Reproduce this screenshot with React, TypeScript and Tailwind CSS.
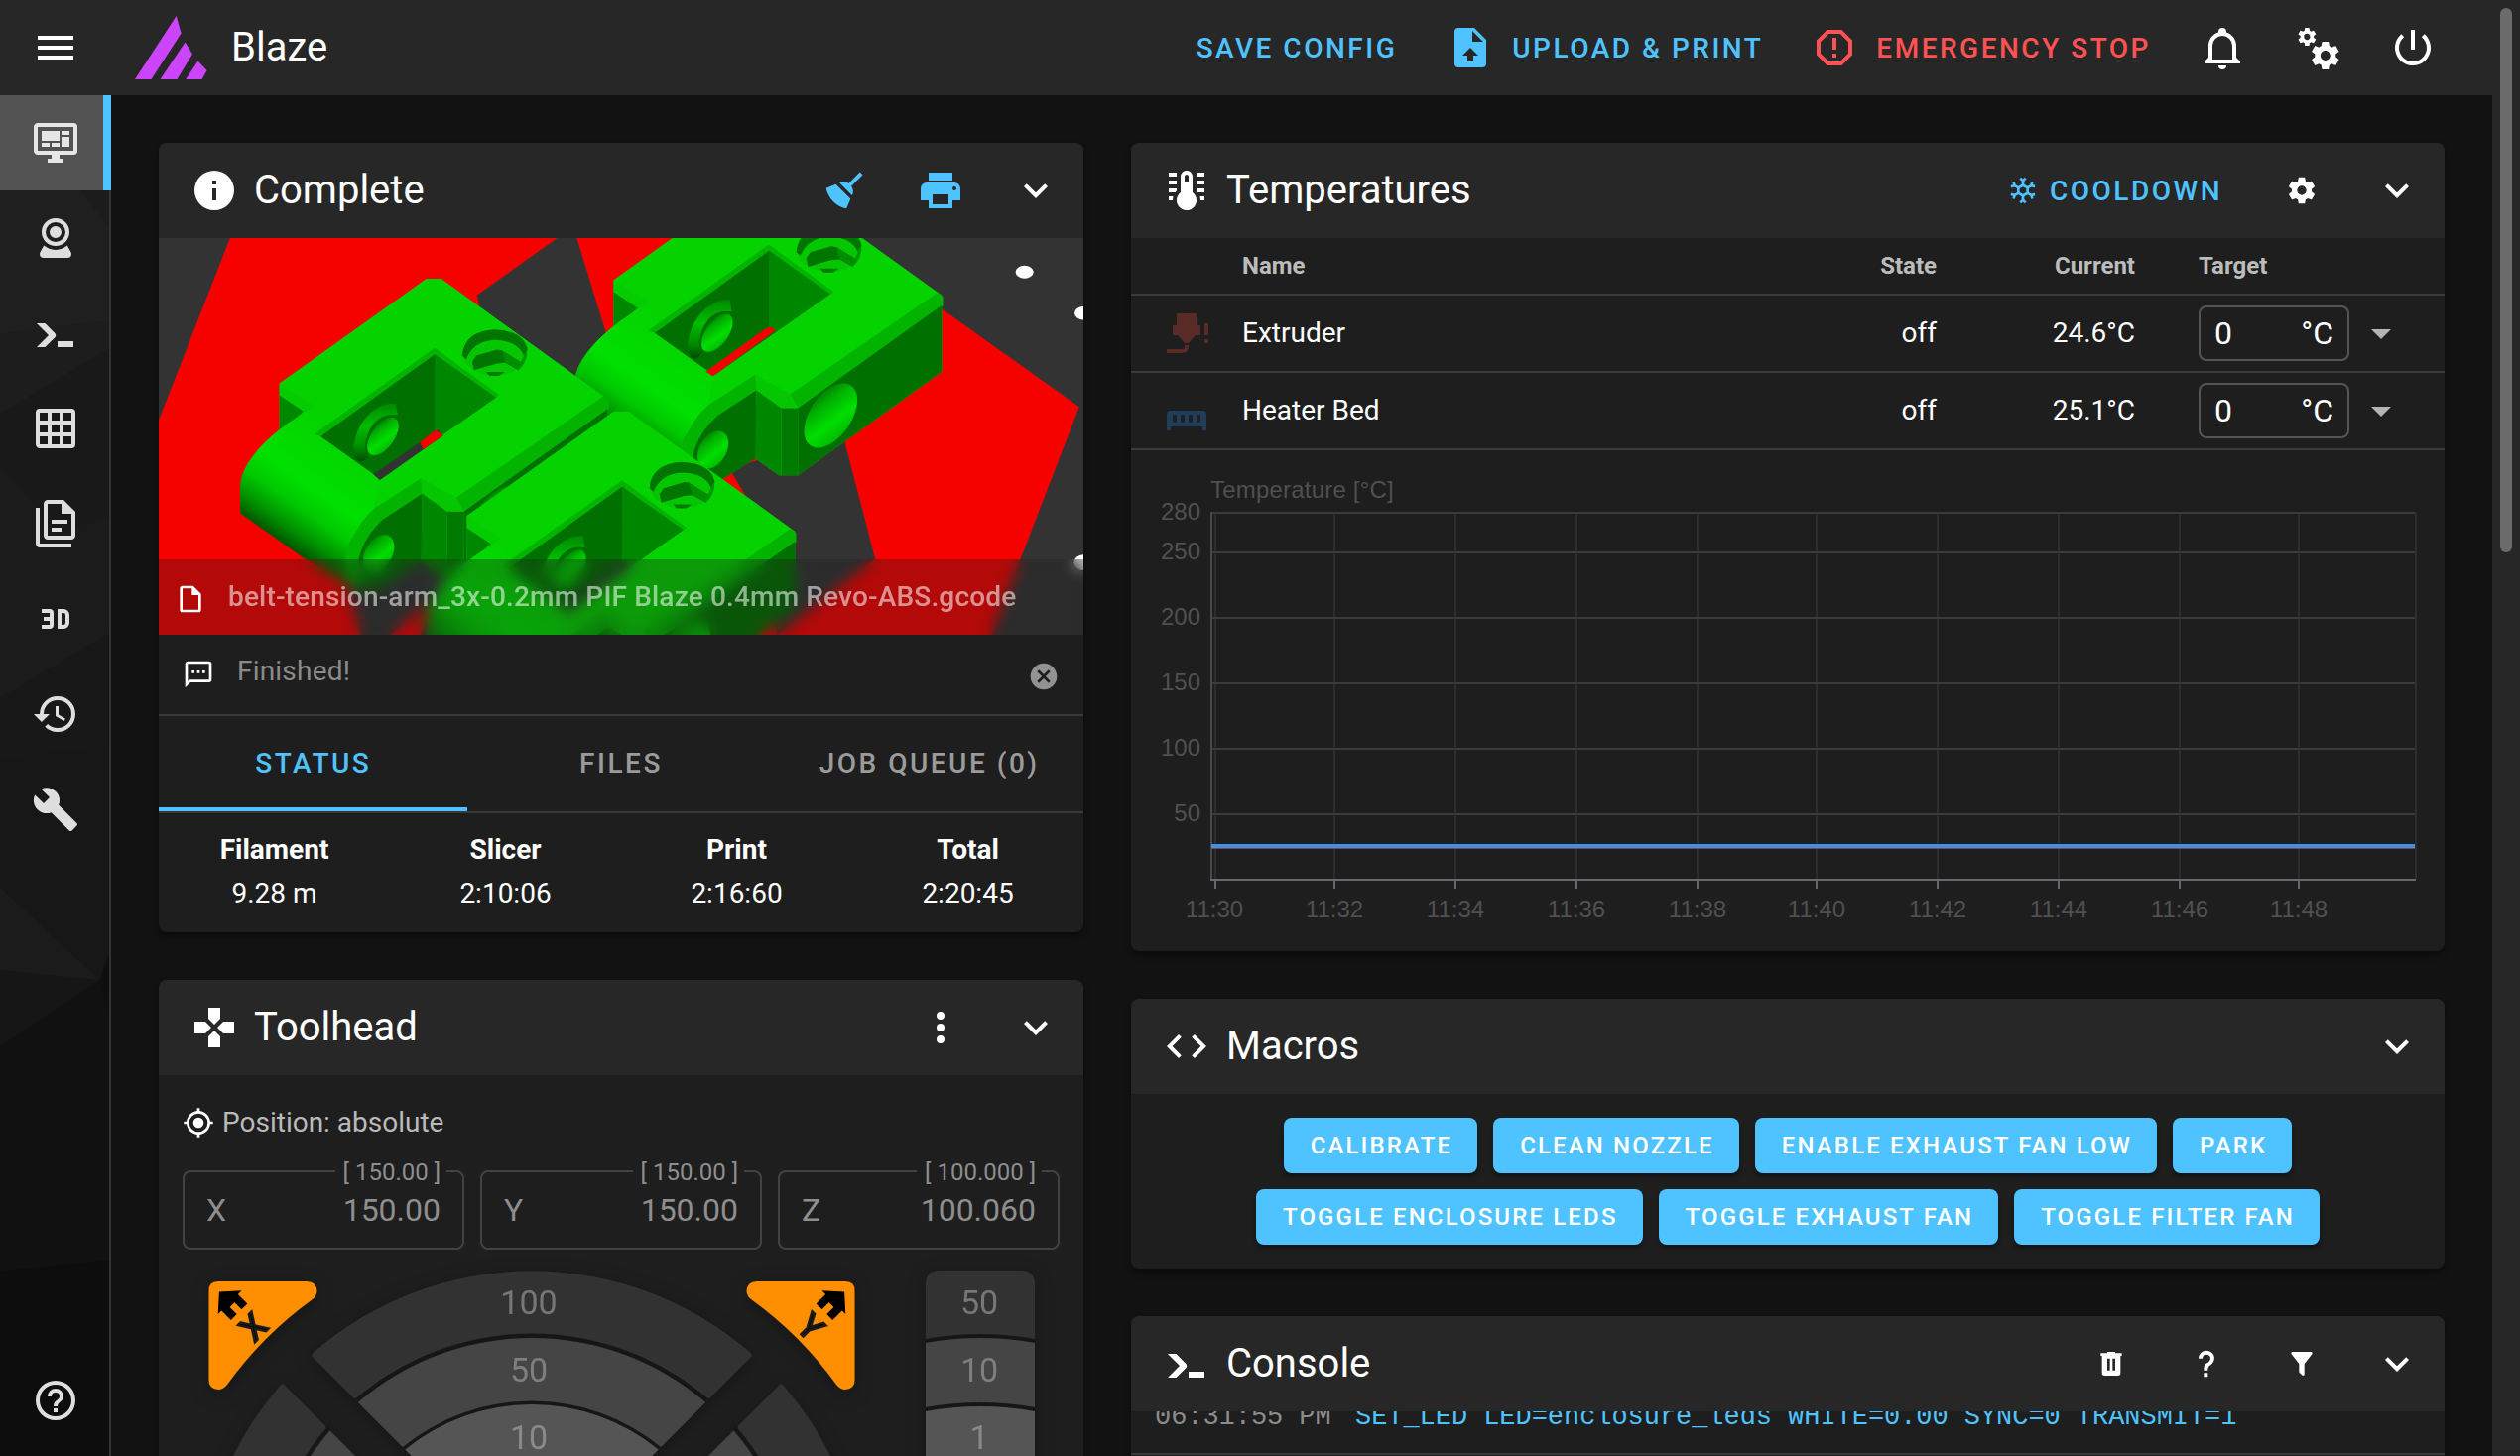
import React from "react";

const I = {
  menu: "M3,6H21V8H3V6M3,11H21V13H3V11M3,16H21V18H3V16Z",
  dashboard:
    "M21,16V4H3V16H21M21,2A2,2 0 0,1 23,4V16A2,2 0 0,1 21,18H14V20H16V22H8V20H10V18H3C1.89,18 1,17.1 1,16V4C1,2.89 1.89,2 3,2H21M5,6H14V11H5V6M15,6H19V8H15V6M19,9V14H15V9H19M5,12H9V14H5V12M10,12H14V14H10V12Z",
  webcam:
    "M12,2A7,7 0 0,1 19,9A7,7 0 0,1 12,16A7,7 0 0,1 5,9A7,7 0 0,1 12,2M12,4A5,5 0 0,0 7,9A5,5 0 0,0 12,14A5,5 0 0,0 17,9A5,5 0 0,0 12,4M12,6A3,3 0 0,1 15,9A3,3 0 0,1 12,12A3,3 0 0,1 9,9A3,3 0 0,1 12,6M6,22A2,2 0 0,1 4,20C4,19.62 4.1,19.27 4.29,18.97L6.11,15.81C7.69,17.17 9.75,18 12,18C14.25,18 16.31,17.17 17.89,15.81L19.71,18.97C19.9,19.27 20,19.62 20,20A2,2 0 0,1 18,22H6Z",
  console:
    "M13,19V16H21V19H13M8.5,13L2.47,7H6.71L11.67,11.95C12.25,12.54 12.25,13.5 11.67,14.07L6.74,19H2.5L8.5,13Z",
  grid: "M10,4V8H14V4H10M16,4V8H20V4H16M16,10V14H20V10H16M16,16V20H20V16H16M14,20V16H10V20H14M8,20V16H4V20H8M8,14V10H4V14H8M8,8V4H4V8H8M10,14H14V10H10V14M4,2H20A2,2 0 0,1 22,4V20A2,2 0 0,1 20,22H4C2.92,22 2,21.1 2,20V4A2,2 0 0,1 4,2Z",
  files:
    "M16 0H8C6.9 0 6 .9 6 2V18C6 19.1 6.9 20 8 20H20C21.1 20 22 19.1 22 18V6L16 0M20 18H8V2H15V7H20V18M4 4V22H20V24H4C2.9 24 2 23.1 2 22V4H4M10 10V12H18V10H10M10 14V16H15V14H10Z",
  viewer3d:
    "M5,7H9A2,2 0 0,1 11,9V15A2,2 0 0,1 9,17H5V15H9V13H6V11H9V9H5V7M13,7H16A3,3 0 0,1 19,10V14A3,3 0 0,1 16,17H13V7M16,15A1,1 0 0,0 17,14V10A1,1 0 0,0 16,9H15V15H16Z",
  history:
    "M13.5,8H12V13L16.28,15.54L17,14.33L13.5,12.25V8M13,3A9,9 0 0,0 4,12H1L4.96,16.03L9,12H6A7,7 0 0,1 13,5A7,7 0 0,1 20,12A7,7 0 0,1 13,19C11.07,19 9.32,18.21 8.06,16.94L6.64,18.36C8.27,20 10.5,21 13,21A9,9 0 0,0 22,12A9,9 0 0,0 13,3",
  wrench:
    "M22.7,19L13.6,9.9C14.5,7.6 14,4.9 12.1,3C10.1,1 7.1,0.6 4.7,1.7L9,6L6,9L1.6,4.7C0.4,7.1 0.9,10.1 2.9,12.1C4.8,14 7.5,14.5 9.8,13.6L18.9,22.7C19.3,23.1 19.9,23.1 20.3,22.7L22.6,20.4C23.1,20 23.1,19.3 22.7,19Z",
  helpCircle:
    "M11,18H13V16H11V18M12,2A10,10 0 0,0 2,12A10,10 0 0,0 12,22A10,10 0 0,0 22,12A10,10 0 0,0 12,2M12,20C7.59,20 4,16.41 4,12C4,7.59 7.59,4 12,4C16.41,4 20,7.59 20,12C20,16.41 16.41,20 12,20M12,6A4,4 0 0,0 8,10H10A2,2 0 0,1 12,8A2,2 0 0,1 14,10C14,12 11,11.75 11,15H13C13,12.75 16,12.5 16,10A4,4 0 0,0 12,6Z",
  fileUpload:
    "M14,2H6A2,2 0 0,0 4,4V20A2,2 0 0,0 6,22H18A2,2 0 0,0 20,20V8L14,2M13.5,16V19H10.5V16H8L12,12L16,16H13.5M13,9V3.5L18.5,9H13Z",
  octagon:
    "M15.73,3H8.27L3,8.27V15.73L8.27,21H15.73L21,15.73V8.27L15.73,3M19,14.9L14.9,19H9.1L5,14.9V9.1L9.1,5H14.9L19,9.1V14.9M11,15H13V17H11V15M11,7H13V13H11V7Z",
  bell: "M10,21H14A2,2 0 0,1 12,23A2,2 0 0,1 10,21M21,19V20H3V19L5,17V11C5,7.9 7.03,5.17 10,4.29C10,4.19 10,4.1 10,4A2,2 0 0,1 12,2A2,2 0 0,1 14,4C14,4.1 14,4.19 14,4.29C16.97,5.17 19,7.9 19,11V17L21,19M17,11A5,5 0 0,0 12,6A5,5 0 0,0 7,11V18H17V11Z",
  cogs: "M15.9,18.45C17.25,18.45 18.35,17.35 18.35,16C18.35,14.65 17.25,13.55 15.9,13.55C14.54,13.55 13.45,14.65 13.45,16C13.45,17.35 14.54,18.45 15.9,18.45M21.1,16.68L22.58,17.84C22.71,17.95 22.75,18.13 22.66,18.29L21.26,20.71C21.17,20.86 21,20.92 20.83,20.86L19.09,20.16C18.73,20.44 18.33,20.67 17.91,20.85L17.64,22.7C17.62,22.87 17.47,23 17.3,23H14.5C14.32,23 14.18,22.87 14.15,22.7L13.89,20.85C13.46,20.67 13.07,20.44 12.71,20.16L10.96,20.86C10.81,20.92 10.62,20.86 10.54,20.71L9.14,18.29C9.05,18.13 9.09,17.95 9.22,17.84L10.7,16.68L10.65,16L10.7,15.31L9.22,14.16C9.09,14.05 9.05,13.86 9.14,13.71L10.54,11.29C10.62,11.13 10.81,11.07 10.96,11.13L12.71,11.84C13.07,11.56 13.46,11.32 13.89,11.15L14.15,9.29C14.18,9.13 14.32,9 14.5,9H17.3C17.47,9 17.62,9.13 17.64,9.29L17.91,11.15C18.33,11.32 18.73,11.56 19.09,11.84L20.83,11.13C21,11.07 21.17,11.13 21.26,11.29L22.66,13.71C22.75,13.86 22.71,14.05 22.58,14.16L21.1,15.31L21.15,16L21.1,16.68M6.69,8.07C7.56,8.07 8.26,7.37 8.26,6.5C8.26,5.63 7.56,4.92 6.69,4.92A1.58,1.58 0 0,0 5.11,6.5C5.11,7.37 5.82,8.07 6.69,8.07M10.03,6.94L11,7.68C11.07,7.75 11.09,7.87 11.03,7.97L10.13,9.53C10.08,9.63 9.96,9.67 9.86,9.63L8.74,9.18L8,9.62L7.81,10.81C7.79,10.92 7.7,11 7.59,11H5.79C5.67,11 5.58,10.92 5.56,10.81L5.4,9.62L4.64,9.18L3.52,9.63C3.41,9.67 3.3,9.63 3.24,9.53L2.34,7.97C2.28,7.87 2.31,7.75 2.39,7.68L3.34,6.94L3.31,6.5L3.34,6.06L2.39,5.32C2.31,5.25 2.28,5.13 2.34,5.03L3.24,3.47C3.3,3.37 3.41,3.33 3.52,3.37L4.63,3.82L5.4,3.38L5.56,2.19C5.58,2.08 5.67,2 5.79,2H7.59C7.7,2 7.79,2.08 7.81,2.19L8,3.38L8.74,3.82L9.86,3.37C9.96,3.33 10.08,3.37 10.13,3.47L11.03,5.03C11.09,5.13 11.07,5.25 11,5.32L10.03,6.06L10.06,6.5L10.03,6.94Z",
  power:
    "M13,3H11V13H13V3M17.83,5.17L16.41,6.59C18.05,7.91 19,9.9 19,12A7,7 0 0,1 12,19C8.14,19 5,15.88 5,12C5,9.91 5.95,7.91 7.58,6.58L6.17,5.17C2.38,8.39 1.92,14.07 5.14,17.86C8.36,21.64 14.04,22.1 17.83,18.88C19.85,17.17 21,14.65 21,12C21,9.37 19.84,6.87 17.83,5.17Z",
  info: "M13,9H11V7H13M13,17H11V11H13M12,2A10,10 0 0,0 2,12A10,10 0 0,0 12,22A10,10 0 0,0 22,12A10,10 0 0,0 12,2Z",
  broom:
    "M19.36,2.72L20.78,4.14L15.06,9.85C16.13,11.39 16.28,13.24 15.38,14.44L9.06,8.12C10.26,7.22 12.11,7.37 13.65,8.44L19.36,2.72M5.93,17.57C3.92,15.56 2.69,13.16 2.35,10.92L7.23,8.83L14.67,16.27L12.58,21.15C10.34,20.81 7.94,19.58 5.93,17.57Z",
  printer:
    "M18,3H6V7H18M19,12A1,1 0 0,1 18,11A1,1 0 0,1 19,10A1,1 0 0,1 20,11A1,1 0 0,1 19,12M16,19H8V14H16M19,8H5A3,3 0 0,0 2,11V17H6V21H18V17H22V11A3,3 0 0,0 19,8Z",
  chevron: "M7.41,8.58L12,13.17L16.59,8.58L18,10L12,16L6,10L7.41,8.58Z",
  file: "M14,2H6A2,2 0 0,0 4,4V20A2,2 0 0,0 6,22H18A2,2 0 0,0 20,20V8L14,2M18,20H6V4H13V9H18V20Z",
  message:
    "M20,2A2,2 0 0,1 22,4V16A2,2 0 0,1 20,18H6L2,22V4C2,2.89 2.9,2 4,2H20M4,4V17.17L5.17,16H20V4H4M7,9H9V11H7V9M11,9H13V11H11V9M15,9H17V11H15V9Z",
  close:
    "M12,2C17.53,2 22,6.47 22,12C22,17.53 17.53,22 12,22C6.47,22 2,17.53 2,12C2,6.47 6.47,2 12,2M15.59,7L12,10.59L8.41,7L7,8.41L10.59,12L7,15.59L8.41,17L12,13.41L15.59,17L17,15.59L13.41,12L17,8.41L15.59,7Z",
  gamepad:
    "M16.5,9L13.5,12L16.5,15H22V9M9,16.5V22H15V16.5L12,13.5M7.5,9H2V15H7.5L10.5,12M15,7.5V2H9V7.5L12,10.5L15,7.5Z",
  dots: "M12,16A2,2 0 0,1 14,18A2,2 0 0,1 12,20A2,2 0 0,1 10,18A2,2 0 0,1 12,16M12,10A2,2 0 0,1 14,12A2,2 0 0,1 12,14A2,2 0 0,1 10,12A2,2 0 0,1 12,10M12,4A2,2 0 0,1 14,6A2,2 0 0,1 12,8A2,2 0 0,1 10,6A2,2 0 0,1 12,4Z",
  crosshair:
    "M12,8A4,4 0 0,1 16,12A4,4 0 0,1 12,16A4,4 0 0,1 8,12A4,4 0 0,1 12,8M3.05,13H1V11H3.05C3.5,6.83 6.83,3.5 11,3.05V1H13V3.05C17.17,3.5 20.5,6.83 20.95,11H23V13H20.95C20.5,17.17 17.17,20.5 13,20.95V23H11V20.95C6.83,20.5 3.5,17.17 3.05,13M12,5A7,7 0 0,0 5,12A7,7 0 0,0 12,19A7,7 0 0,0 19,12A7,7 0 0,0 12,5Z",
  thermometer:
    "M17 3H21V5H17V3M17 7H21V9H17V7M17 11H21V13H17.75L17 12.1V11M21 15V17H19C19 16.31 18.9 15.63 18.71 15H21M7 3V5H3V3H7M7 7V9H3V7H7M7 11V12.1L6.25 13H3V11H7M3 15H5.29C5.1 15.63 5 16.31 5 17H3V15M15 13V5C15 3.34 13.66 2 12 2S9 3.34 9 5V13C6.79 14.66 6.34 17.79 8 20S12.79 22.66 15 21 17.66 16.21 16 14C15.72 13.62 15.38 13.28 15 13M12 4C12.55 4 13 4.45 13 5V8H11V5C11 4.45 11.45 4 12 4Z",
  nozzle:
    "M7,2H17V8H19V13H16.5L13,17H11L7.5,13H5V8H7V2M10,22H2V20H10A1,1 0 0,0 11,19V18H13V19A3,3 0 0,1 10,22M21,7H23V13H21V7M21,15H23V17H21V15Z",
  radiator:
    "M22,14V22H20V20H4V22H2V14A2,2 0 0,1 4,12H20A2,2 0 0,1 22,14M6,14A1,1 0 0,0 5,15V17A1,1 0 0,0 6,18A1,1 0 0,0 7,17V15A1,1 0 0,0 6,14M10,14A1,1 0 0,0 9,15V17A1,1 0 0,0 10,18A1,1 0 0,0 11,17V15A1,1 0 0,0 10,14M14,14A1,1 0 0,0 13,15V17A1,1 0 0,0 14,18A1,1 0 0,0 15,17V15A1,1 0 0,0 14,14M18,14A1,1 0 0,0 17,15V17A1,1 0 0,0 18,18A1,1 0 0,0 19,17V15A1,1 0 0,0 18,14Z",
  snow: "M20.79,13.95L18.46,14.57L16.46,13.44V10.56L18.46,9.43L20.79,10.05L21.31,8.12L19.54,7.65L20,5.88L18.07,5.36L17.45,7.69L15.45,8.82L13,7.38V5.12L14.71,3.41L13.29,2L12,3.29L10.71,2L9.29,3.41L11,5.12V7.38L8.5,8.82L6.5,7.69L5.92,5.36L4,5.88L4.47,7.65L2.7,8.12L3.22,10.05L5.55,9.43L7.55,10.56V13.45L5.55,14.58L3.22,13.96L2.7,15.89L4.47,16.36L4,18.12L5.93,18.64L6.55,16.31L8.55,15.18L11,16.62V18.88L9.29,20.59L10.71,22L12,20.71L13.29,22L14.7,20.59L13,18.88V16.62L15.5,15.17L17.5,16.3L18.12,18.63L20,18.12L19.53,16.35L21.3,15.88L20.79,13.95M9.5,10.56L12,9.11L14.5,10.56V13.44L12,14.89L9.5,13.44V10.56Z",
  cog: "M12,15.5A3.5,3.5 0 0,1 8.5,12A3.5,3.5 0 0,1 12,8.5A3.5,3.5 0 0,1 15.5,12A3.5,3.5 0 0,1 12,15.5M19.43,12.97C19.47,12.65 19.5,12.33 19.5,12C19.5,11.67 19.47,11.34 19.43,11L21.54,9.37C21.73,9.22 21.78,8.95 21.66,8.73L19.66,5.27C19.54,5.05 19.27,4.96 19.05,5.05L16.56,6.05C16.04,5.66 15.5,5.32 14.87,5.07L14.5,2.42C14.46,2.18 14.25,2 14,2H10C9.75,2 9.54,2.18 9.5,2.42L9.13,5.07C8.5,5.32 7.96,5.66 7.44,6.05L4.95,5.05C4.73,4.96 4.46,5.05 4.34,5.27L2.34,8.73C2.21,8.95 2.27,9.22 2.46,9.37L4.57,11C4.53,11.34 4.5,11.67 4.5,12C4.5,12.33 4.53,12.65 4.57,12.97L2.46,14.63C2.27,14.78 2.21,15.05 2.34,15.27L4.34,18.73C4.46,18.95 4.73,19.03 4.95,18.95L7.44,17.94C7.96,18.34 8.5,18.68 9.13,18.93L9.5,21.58C9.54,21.82 9.75,22 10,22H14C14.25,22 14.46,21.82 14.5,21.58L14.87,18.93C15.5,18.67 16.04,18.34 16.56,17.94L19.05,18.95C19.27,19.03 19.54,18.95 19.66,18.73L21.66,15.27C21.78,15.05 21.73,14.78 21.54,14.63L19.43,12.97Z",
  code: "M14.6,16.6L19.2,12L14.6,7.4L16,6L22,12L16,18L14.6,16.6M9.4,16.6L4.8,12L9.4,7.4L8,6L2,12L8,18L9.4,16.6Z",
  trash:
    "M9,3V4H4V6H5V19A2,2 0 0,0 7,21H17A2,2 0 0,0 19,19V6H20V4H15V3H9M9,8H11V17H9V8M13,8H15V17H13V8Z",
  help: "M10,19H13V22H10V19M12,2C17.35,2.22 19.68,7.62 16.5,11.67C15.67,12.67 14.33,13.33 13.67,14.17C13,15 13,16 13,17H10C10,15.33 10,13.92 10.67,12.92C11.33,11.92 12.67,11.33 13.5,10.67C15.92,8.43 15.32,5.26 12,5A3,3 0 0,0 9,8H6A6,6 0 0,1 12,2Z",
  filter:
    "M14,12V19.88C14.04,20.18 13.94,20.5 13.71,20.71C13.32,21.1 12.69,21.1 12.3,20.71L10.29,18.7C10.06,18.47 9.96,18.16 10,17.87V12H9.97L4.21,4.62C3.87,4.19 3.95,3.56 4.38,3.22C4.57,3.08 4.78,3 5,3H19C19.22,3 19.43,3.08 19.62,3.22C20.05,3.56 20.13,4.19 19.79,4.62L14.03,12H14Z",
  menuDown: "M7,10L12,15L17,10H7Z",
  home: "M10,20V14H14V20H19V12H22L12,3L2,12H5V20H10Z",
};

function Icon({ d, className = "size-12" }: { d: string; className?: string }) {
  return (
    <svg viewBox="0 0 24 24" className={`${className} shrink-0 fill-current`}>
      <path d={d} />
    </svg>
  );
}

function Header() {
  return (
    <header className="flex h-24 shrink-0 items-center bg-[#272727] pl-8 pr-8 text-white">
      <Icon d={I.menu} />
      <svg viewBox="136 16 73 64" className="ml-14 h-16 w-[73px] shrink-0 fill-[#cc45fb]">
        <path d="M177.7 16L182.6 33.5L152.5 80H136Z" />
        <path d="M186.6 42.5L194 54.5L178.5 80H161.5Z" />
        <path d="M199.5 61.5L208.6 71L203.6 80H187.2Z" />
      </svg>
      <h1 className="ml-6 text-[40px] leading-none">Blaze</h1>
      <div className="ml-auto flex items-center text-[28px] font-medium tracking-[0.0893em] text-[#4fc3ff]">
        <span className="pl-6 pr-[26px] pt-0.5">SAVE CONFIG</span>
        <span className="flex items-center gap-[18px] px-6">
          <Icon d={I.fileUpload} />
          <span className="pt-0.5">UPLOAD &amp; PRINT</span>
        </span>
        <span className="flex items-center gap-[18px] px-6 text-[#ff5252]">
          <Icon d={I.octagon} />
          <span className="pt-0.5">EMERGENCY STOP</span>
        </span>
      </div>
      {[I.bell, I.cogs, I.power].map((d, i) => (
        <span key={i} className="flex w-24 justify-center">
          <Icon d={d} />
        </span>
      ))}
    </header>
  );
}

function Sidebar() {
  const items = [I.dashboard, I.webcam, I.console, I.grid, I.files, I.viewer3d, I.history, I.wrench];
  return (
    <aside className="relative flex w-28 shrink-0 flex-col bg-[#1c1c1c] text-[#dedede]">
      <svg viewBox="0 96 112 1372" className="absolute inset-0 size-full">
        <path d="M0 96H9L112 233V323L0 337Z" fill="#1f1f1f" />
        <path d="M0 337L112 323V350L0 417Z" fill="#1d1d1d" />
        <path d="M0 417L112 350V637L0 704Z" fill="#191919" />
        <path d="M0 470L60 540L112 520V637L0 704Z" fill="#1b1b1b" />
        <path d="M0 704L112 637V752L0 765Z" fill="#181818" />
        <path d="M0 765L112 752V955L100 988L0 895Z" fill="#171717" />
        <path d="M0 895L100 988L0 978Z" fill="#1b1b1b" />
        <path d="M0 978L100 988L0 1055Z" fill="#161616" />
        <path d="M0 1055L100 988L112 1031V1270L0 1281Z" fill="#111111" />
        <path d="M112 955L100 988L112 1031Z" fill="#0f0f0f" />
        <path d="M0 1281L112 1270V1468H0Z" fill="#0d0d0d" />
      </svg>
      <div className="absolute inset-y-0 right-0 w-0.5 bg-[#343434]" />
      {items.map((d, i) => (
        <div
          key={i}
          className={
            i === 0
              ? "relative flex h-24 items-center justify-center bg-[#525252] text-[#e6e6e6]"
              : "relative flex h-24 items-center justify-center"
          }
        >
          <Icon d={d} />
          {i === 0 && <div className="absolute inset-y-0 right-0 w-2 bg-[#4fc3ff]" />}
        </div>
      ))}
      <div className="relative mt-auto mb-2 flex h-24 items-center justify-center">
        <Icon d={I.helpCircle} />
      </div>
    </aside>
  );
}

function Card({
  icon,
  title,
  actions,
  children,
  className = "",
}: {
  icon: string;
  title: string;
  actions?: React.ReactNode;
  children?: React.ReactNode;
  className?: string;
}) {
  return (
    <section
      className={`${className} flex shrink-0 flex-col overflow-hidden rounded-lg bg-[#1e1e1e] shadow-[0_4px_6px_rgba(0,0,0,0.4)]`}
    >
      <div className="flex h-24 shrink-0 items-center bg-[#272727] pl-8 text-white">
        <Icon d={icon} />
        <h2 className="ml-4 text-[40px] leading-none">{title}</h2>
        <div className="ml-auto flex items-center">
          {actions}
          <Action d={I.chevron} />
        </div>
      </div>
      {children}
    </section>
  );
}

function Action({ d, small, blue }: { d: string; small?: boolean; blue?: boolean }) {
  return (
    <span className={blue ? "flex w-24 justify-center text-[#4fc3ff]" : "flex w-24 justify-center"}>
      <Icon d={d} className={small ? "size-8" : "size-12"} />
    </span>
  );
}

/* One printed tension arm; the print bed holds three copies of it. */
function Arm({ x, y, floor }: { x: number; y: number; floor: React.ReactNode }) {
  return (
    <g transform={`translate(${x} ${y})`}>
      <path
        d="M450 423H475L755 762V977L513 1270H481L441 1222L367 1300L330 1295L139 1087Q136 1075 137 1020Q143 925 203 850V718Z"
        fill="#05d300"
      />
      <path d="M203 735L248 792L220 830L203 852Z" fill="#008700" />
      <path d="M203 718L262 782L246 800L203 752Z" fill="#05cc00" />
      <path
        d="M262 782L215 833Q143 925 137 1000V1060Q136 1080 139 1087L245 1213L325 1292L314 1213Q320 1150 361 1073L372 988L272 868Z"
        fill="url(#barrel)"
      />
      <path d="M314 1213Q318 1165 328 1148Q340 1105 361 1073L441 986L444 1033L378 1101Q345 1150 338 1215L345 1297L325 1292Z" fill="#02b400" />
      <path d="M443 1030L378 1101Q345 1150 336 1215L338 1296L367 1300L442 1222Z" fill="#007000" />
      <ellipse cx="370" cy="1198" rx="24" ry="54" transform="rotate(12 370 1198)" fill="url(#bore)" />
      <path d="M441 986L500 1041L511 1080H485L443 1032Z" fill="#05c600" />
      <path d="M443 1030L485 1080V1270H481L441 1222Z" fill="#008700" />
      <path d="M485 1080H513V1270H485Z" fill="#007a00" />
      <path d="M500 1041L748 754L757 766V792L513 1080Z" fill="#02b400" />
      <path d="M513 1080L755 790V977L513 1270Z" fill="#007000" />
      <ellipse cx="568" cy="1101" rx="38" ry="94" transform="rotate(16 568 1101)" fill="url(#bore)" />
      <path d="M464 618L573 752L567 758L464 636L272 868L261 862Z" fill="#02b400" />
      <path d="M464 636L567 758L372 988L272 868Z" fill="#007000" />
      <path d="M464 636L567 758L475 866L464 850Z" fill="#008700" />
      <path d="M398 774Q360 775 338 840Q320 905 333 935Q345 950 355 915Q340 880 362 830Q380 800 402 808Z" fill="url(#ring)" />
      <ellipse cx="375" cy="868" rx="23" ry="58" transform="rotate(18 375 868)" fill="#007000" />
      <ellipse cx="377" cy="868" rx="21" ry="56" transform="rotate(18 377 868)" fill="url(#bore)" />
      {floor}
      <ellipse cx="565" cy="634" rx="54" ry="62" fill="#05c600" />
      <path d="M510 640Q514 570 565 566Q614 570 620 622L614 640Q604 598 566 596Q530 598 517 650Z" fill="#007600" />
      <path d="M614 640L620 622Q620 660 605 681L608 660Z" fill="#009400" />
      <path d="M527 657L534 640L569 623L577 625L608 657L605 681L583 660L569 662L530 681Z" fill="#007600" />
      <path d="M577 625L608 657L605 681L583 660Z" fill="#008e00" />
      <path d="M550 686H582L572 697H556Z" fill="#007a00" />
    </g>
  );
}

function Thumbnail() {
  return (
    <svg viewBox="0 308 1555 1120" preserveAspectRatio="none" className="absolute inset-0 size-full">
      <defs>
        <linearGradient id="barrel" gradientUnits="userSpaceOnUse" x1="262" y1="800" x2="45" y2="986">
          <stop offset="0" stopColor="#05d300" />
          <stop offset="0.5" stopColor="#00e000" />
          <stop offset="0.68" stopColor="#00c800" />
          <stop offset="0.85" stopColor="#009000" />
          <stop offset="1" stopColor="#004c00" />
        </linearGradient>
        <linearGradient id="bore" x1="0" y1="0" x2="1" y2="1">
          <stop offset="0" stopColor="#006000" />
          <stop offset="0.3" stopColor="#00b000" />
          <stop offset="0.6" stopColor="#00de00" />
          <stop offset="1" stopColor="#00a800" />
        </linearGradient>
        <linearGradient id="ring" x1="0" y1="0" x2="0" y2="1">
          <stop offset="0" stopColor="#008a00" />
          <stop offset="0.4" stopColor="#00bc00" />
          <stop offset="0.75" stopColor="#008c00" />
          <stop offset="1" stopColor="#004c00" />
        </linearGradient>
      </defs>
      <path d="M0 308H1555V1428H0Z" fill="#333333" />
      <path d="M120 308H670L535 470L560 640L440 1428H0V822Z" fill="#f60000" />
      <path d="M703 308H1180L1317 508L1548 785L1400 1428H960L830 1000Z" fill="#f60000" />
      <path d="M960 960L990 1045L1040 1428L1205 1215L1150 860Z" fill="#333333" />
      <path d="M340 1428L305 1220H520L456 1335L389 1428Z" fill="#333333" />
      <g fill="#ffffff">
        <ellipse cx="1456" cy="404" rx="15" ry="18" />
        <ellipse cx="1555" cy="520" rx="15" ry="19" />
        <ellipse cx="1556" cy="1224" rx="17" ry="22" />
      </g>
      <Arm x={562} y={-292} floor={<path d="M358 977L460 854Q470 848 475 862L370 990Z" fill="#f60000" />} />
      <Arm
        x={0}
        y={0}
        floor={
          <>
            <path d="M361 975L470 849L478 866L372 991Z" fill="#333333" />
            <path d="M439 885L466 850L478 866L445 905Z" fill="#f60000" />
          </>
        }
      />
      <Arm x={315} y={374} floor={<path d="M361 975L470 849L478 866L372 991Z" fill="#333333" />} />
    </svg>
  );
}

function StatusCard() {
  const stats = [
    ["Filament", "9.28 m"],
    ["Slicer", "2:10:06"],
    ["Print", "2:16:60"],
    ["Total", "2:20:45"],
  ];
  return (
    <Card
      icon={I.info}
      title="Complete"
      className="h-[796px]"
      actions={
        <>
          <Action d={I.broom} blue />
          <Action d={I.printer} blue />
        </>
      }
    >
      <div className="relative flex h-[400px] shrink-0 flex-col justify-end overflow-hidden">
        <Thumbnail />
        <div className="relative flex h-[76px] items-center bg-[rgba(30,30,30,0.31)] pl-4 backdrop-blur-[7px]">
          <Icon d={I.file} className="mt-1 size-8 text-white" />
          <span className="ml-[22px] whitespace-nowrap text-[28px] font-medium tracking-[0.17px] text-white/55">
            belt-tension-arm_3x-0.2mm PIF Blaze 0.4mm Revo-ABS.gcode
          </span>
        </div>
      </div>
      <div className="flex h-[82px] shrink-0 items-center border-b-2 border-[#393939] pl-6 pr-6">
        <Icon d={I.message} className="size-8 text-white" />
        <span className="-mt-1.5 ml-[23px] text-[28px] tracking-[0.2px] text-[#8b8b8b]">Finished!</span>
        <Icon d={I.close} className="mt-1 ml-auto size-8 text-[#929292]" />
      </div>
      <div className="grid h-[98px] shrink-0 grid-cols-3 border-b-2 border-[#393939] text-[28px] font-medium tracking-[0.0893em] text-[#9b9b9b]">
        <div className="flex items-center justify-center border-b-4 border-[#4fc3ff] pt-1 pl-px text-[#4fc3ff]">
          STATUS
        </div>
        <div className="flex items-center justify-center">FILES</div>
        <div className="flex items-center justify-center">JOB QUEUE (0)</div>
      </div>
      <div className="grid grid-cols-4 pt-[15px] text-center text-[28px] leading-[44px] text-white">
        {stats.map(([k, v]) => (
          <div key={k}>
            <div className="font-bold">{k}</div>
            <div>{v}</div>
          </div>
        ))}
      </div>
    </Card>
  );
}

function PositionField({ axis, value, target }: { axis: string; value: string; target: string }) {
  return (
    <div className="relative flex h-20 items-center justify-between rounded-lg border-2 border-[#424242] px-[22px] text-[32px] text-[#8e8e8e]">
      <span>{axis}</span>
      <span>{value}</span>
      <span className="absolute -top-4 right-4 bg-[#1e1e1e] pl-2 pr-1.5 text-[24px] leading-8">{`[ ${target} ]`}</span>
    </div>
  );
}

/* Annular wedge facing up, centred on the origin, with straight sides offset from the diagonals. */
function wedge(outer: number, inner: number, inset = 20) {
  const corner = (r: number) => {
    const o = inset * Math.SQRT2;
    const x = (-o + Math.sqrt(2 * r * r - o * o)) / 2;
    return [x, -(x + o)];
  };
  const [ox, oy] = corner(outer);
  const [ix, iy] = corner(inner);
  return `M${-ox} ${oy}A${outer} ${outer} 0 0 1 ${ox} ${oy}L${ix} ${iy}A${inner} ${inner} 0 0 0 ${-ix} ${iy}Z`;
}

function MotionPad() {
  const homeShape =
    "M220 1292H309Q319 1292 319.500 1302Q319 1307 315 1310A380 380 0 0 0 229 1396Q225 1401 220 1401Q210 1400 210.500 1391V1302Q210 1292 220 1292Z";
  return (
    <svg viewBox="160 1260 932 208" className="h-[208px] w-[932px] shrink-0">
      <defs>
        <filter id="soft" x="-30%" y="-30%" width="160%" height="160%">
          <feDropShadow dx="0" dy="4" stdDeviation="9" floodColor="#000" floodOpacity="0.28" />
        </filter>
        <clipPath id="zcol">
          <path d="M933 1295Q933 1281 947 1281H1029Q1043 1281 1043 1295V1480H933Z" />
        </clipPath>
      </defs>
      <g filter="url(#soft)">
        <g transform="translate(536 1617.500)">
          {[0, -90, 90].map((a) => (
            <g key={a} transform={`rotate(${a})`}>
              <path d={wedge(330, 137)} fill="#191919" />
              <path
                d={wedge(333, 276, 23)}
                fill="#333333"
                stroke="#333333"
                strokeWidth="6"
                strokeLinejoin="round"
              />
              <path d={wedge(268.5, 205)} fill="#444444" />
              <path d={wedge(201.500, 137)} fill="#555555" />
            </g>
          ))}
        </g>
        <path d={homeShape} fill="#ff8f00" />
        <path d={homeShape} fill="#ff8f00" transform="translate(1072 0) scale(-1 1)" />
        <g clipPath="url(#zcol)">
          <path d="M933 1281H1043V1468H933Z" fill="#191919" />
          <path d="M933 1281H1043V1350Q988 1340 933 1350Z" fill="#333333" />
          <path d="M933 1354Q988 1344 1043 1354V1419Q988 1409 933 1419Z" fill="#444444" />
          <path d="M933 1423Q988 1413 1043 1423V1480H933Z" fill="#555555" />
        </g>
      </g>
      <path d={I.home} transform="translate(231 1312.600) rotate(-45) scale(1.68) translate(-12 -11.500)" />
      <path d={I.home} transform="translate(841 1312.600) rotate(45) scale(1.68) translate(-12 -11.500)" />
      <g fontFamily="Roboto, sans-serif" fontSize="34" textAnchor="middle" fill="#7f7f7f">
        <g fill="#000" stroke="#1b1b1b" strokeWidth="2.500">
          <text transform="translate(255.300 1338) rotate(-45)" y="12">X</text>
          <text transform="translate(817 1338) rotate(45)" y="12">Y</text>
        </g>
        <text x="533" y="1325" fill="#777777">100</text>
        <text x="533" y="1393">50</text>
        <text x="533" y="1461" fill="#8a8a8a">10</text>
        <text x="987" y="1325" fill="#777777">50</text>
        <text x="987" y="1393">10</text>
        <text x="987" y="1461" fill="#8a8a8a">1</text>
      </g>
    </svg>
  );
}

function ToolheadCard() {
  return (
    <Card icon={I.gamepad} title="Toolhead" className="h-[600px]" actions={<Action d={I.dots} />}>
      <div className="flex h-24 shrink-0 items-center gap-2 pl-6 text-[28px] text-[#bababa]">
        <Icon d={I.crosshair} className="size-8 text-white" />
        Position: absolute
      </div>
      <div className="grid shrink-0 grid-cols-3 gap-4 px-6">
        <PositionField axis="X" value="150.00" target="150.00" />
        <PositionField axis="Y" value="150.00" target="150.00" />
        <PositionField axis="Z" value="100.060" target="100.000" />
      </div>
      <MotionPad />
    </Card>
  );
}

function TempRow({ icon, name, current }: { icon: React.ReactNode; name: string; current: string }) {
  return (
    <div className="flex h-[78px] shrink-0 items-center border-b-2 border-[#3b3b3b] text-[28px] text-white">
      <span className="flex w-28 pl-8">{icon}</span>
      <span className="w-[500px]">{name}</span>
      <span className="w-[200px] text-right">off</span>
      <span className="w-[200px] text-right">{current}</span>
      <span className="ml-16 flex h-14 w-[152px] items-center justify-between rounded-lg border-2 border-[#555555] px-3.5 text-[32px]">
        <span>0</span>
        <span>°C</span>
      </span>
      <Icon d={I.menuDown} className="ml-2 size-12 text-[#b4b4b4]" />
    </div>
  );
}

function TempChart() {
  const xs = [1225, 1345, 1467, 1589, 1711, 1831, 1953, 2075, 2197, 2317];
  const ys: [string, number][] = [
    ["280", 517],
    ["250", 557],
    ["200", 623],
    ["150", 689],
    ["100", 755],
    ["50", 821],
  ];
  return (
    <svg viewBox="1140 454 1324 505" className="h-[505px] w-[1324px] shrink-0" shapeRendering="crispEdges">
      {xs.concat([2435]).map((x) => (
        <path key={x} d={`M${x} 517V886`} stroke="#2d2d2d" strokeWidth="2" />
      ))}
      {ys.map(([, y]) => (
        <path key={y} d={`M1221 ${y}H2434`} stroke="#3a3a3a" strokeWidth="2" />
      ))}
      <path d="M1221 516V887" stroke="#48484b" strokeWidth="2" />
      <path d="M1220 887H2435" stroke="#66686e" strokeWidth="2" />
      {xs.map((x) => (
        <path key={x} d={`M${x} 887V896`} stroke="#66686e" strokeWidth="2" />
      ))}
      <path d="M1221 854H2434" stroke="#8a4048" strokeWidth="3" />
      <path d="M1221 853H2434" stroke="#3f8fe3" strokeWidth="4" />
      <g fontFamily="'Liberation Sans', sans-serif" fontSize="24" fill="#505050">
        <text x="1220" y="502" letterSpacing="0.200">Temperature [°C]</text>
        {ys.map(([t, y]) => (
          <text key={t} x="1210" y={y + 7} textAnchor="end">{t}</text>
        ))}
        {xs.map((x, i) => (
          <text key={x} x={i === 0 ? x - 1 : x} y="925" textAnchor="middle">{`11:${30 + i * 2}`}</text>
        ))}
      </g>
    </svg>
  );
}

function TemperatureCard() {
  return (
    <Card
      icon={I.thermometer}
      title="Temperatures"
      className="h-[815px]"
      actions={
        <>
          <span className="flex items-center gap-[11px] pr-8 text-[28px] font-medium tracking-[0.0893em] text-[#4fc3ff]">
            <Icon d={I.snow} className="size-8" />
            <span className="pt-0.5">COOLDOWN</span>
          </span>
          <Action d={I.cog} small />
        </>
      }
    >
      <div className="flex h-[58px] shrink-0 items-center border-b-2 border-[#3b3b3b] pl-28 text-[24px] font-bold text-[#bcbcbc]">
        <span className="w-[500px]">Name</span>
        <span className="w-[200px] text-right">State</span>
        <span className="w-[200px] text-right">Current</span>
        <span className="ml-16">Target</span>
      </div>
      <TempRow icon={<Icon d={I.nozzle} className="size-12 text-[#5a2a27]" />} name="Extruder" current="24.6°C" />
      <TempRow icon={<Icon d={I.radiator} className="size-12 text-[#213d58]" />} name="Heater Bed" current="25.1°C" />
      <TempChart />
    </Card>
  );
}

function MacroButton({ children }: { children: string }) {
  return (
    <span className="flex h-14 items-center rounded-lg bg-[#4fc3ff] pl-[27px] pr-[25px] text-[24px] font-medium tracking-[0.0893em] text-white shadow-[0_4px_4px_rgba(0,0,0,0.35)]">
      {children}
    </span>
  );
}

function MacrosCard() {
  return (
    <Card icon={I.code} title="Macros" className="h-[272px]">
      <div className="flex flex-col gap-4 pt-6">
        <div className="flex justify-center gap-4">
          <MacroButton>CALIBRATE</MacroButton>
          <MacroButton>CLEAN NOZZLE</MacroButton>
          <MacroButton>ENABLE EXHAUST FAN LOW</MacroButton>
          <MacroButton>PARK</MacroButton>
        </div>
        <div className="flex justify-center gap-4">
          <MacroButton>TOGGLE ENCLOSURE LEDS</MacroButton>
          <MacroButton>TOGGLE EXHAUST FAN</MacroButton>
          <MacroButton>TOGGLE FILTER FAN</MacroButton>
        </div>
      </div>
    </Card>
  );
}

function ConsoleCard() {
  return (
    <Card
      icon={I.console}
      title="Console"
      className="h-[240px]"
      actions={
        <>
          <Action d={I.trash} small />
          <Action d={I.help} small />
          <Action d={I.filter} small />
        </>
      }
    >
      <div className="flex h-11 shrink-0 overflow-hidden border-b-2 border-[#393939] font-['Liberation_Mono',monospace] text-[27px] leading-8 tracking-[-0.05px]">
        <span className="-mt-[10px] w-[226px] shrink-0 pl-6 text-[#8c8c8c]">06:31:55 PM</span>
        <span className="-mt-[10px] whitespace-nowrap text-[#4fc3ff]">
          SET_LED LED=enclosure_leds WHITE=0.00 SYNC=0 TRANSMIT=1
        </span>
      </div>
    </Card>
  );
}

export default function App() {
  return (
    <div className="flex h-[1468px] w-[2540px] overflow-hidden bg-[#121212] font-['Roboto',sans-serif]">
      <div className="flex w-[2512px] shrink-0 flex-col">
        <Header />
        <div className="flex h-[1372px]">
          <Sidebar />
          <main className="flex h-[1372px] flex-1 gap-12 overflow-hidden px-12 pt-12">
            <div className="flex w-[932px] shrink-0 flex-col gap-12">
              <StatusCard />
              <ToolheadCard />
            </div>
            <div className="flex w-[1324px] shrink-0 flex-col gap-12">
              <TemperatureCard />
              <MacrosCard />
              <ConsoleCard />
            </div>
          </main>
        </div>
      </div>
      <div className="flex w-7 shrink-0 bg-[#272727] pl-2 pt-2">
        <div className="h-[549px] w-3 rounded-full bg-[#6b6b6b]" />
      </div>
    </div>
  );
}
